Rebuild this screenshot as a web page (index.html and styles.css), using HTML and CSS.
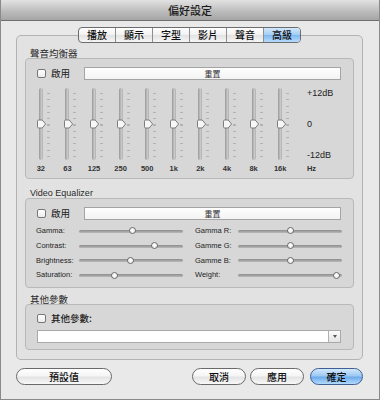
FILE: index.html
```html
<!DOCTYPE html>
<html lang="zh-Hant">
<head>
<meta charset="utf-8">
<title>偏好設定</title>
<link rel="stylesheet" href="styles.css">
</head>
<body>
<svg class="defs" width="0" height="0" aria-hidden="true">
  <symbol id="vthumb" viewBox="0 0 11 10">
    <path d="M1.5 2.2 Q1.5 1 2.7 1 H6.2 L9.6 5 L6.2 9 H2.7 Q1.5 9 1.5 7.8 Z" fill="#f7f7f7" stroke="#7c7c7c" stroke-width="1"/>
  </symbol>
</svg>
<div class="window">
  <div class="titlebar">偏好設定</div>
  <div class="content">
    <div class="tabs">
      <span class="tab">播放</span>
      <span class="tab">顯示</span>
      <span class="tab">字型</span>
      <span class="tab">影片</span>
      <span class="tab">聲音</span>
      <span class="tab active">高級</span>
    </div>
    <div class="panel">
      <div class="section-label">聲音均衡器</div>
      <div class="group eq">
        <div class="check-row">
          <span class="checkbox"></span><span class="check-label">啟用</span>
          <span class="reset">重置</span>
        </div>
        <div class="eq-body">
          <div class="band"><div class="vslider"><span class="vtrack"></span><span class="ticks"></span><svg class="vthumb"><use href="#vthumb"/></svg></div><span class="band-label">32</span></div>
          <div class="band"><div class="vslider"><span class="vtrack"></span><span class="ticks"></span><svg class="vthumb"><use href="#vthumb"/></svg></div><span class="band-label">63</span></div>
          <div class="band"><div class="vslider"><span class="vtrack"></span><span class="ticks"></span><svg class="vthumb"><use href="#vthumb"/></svg></div><span class="band-label">125</span></div>
          <div class="band"><div class="vslider"><span class="vtrack"></span><span class="ticks"></span><svg class="vthumb"><use href="#vthumb"/></svg></div><span class="band-label">250</span></div>
          <div class="band"><div class="vslider"><span class="vtrack"></span><span class="ticks"></span><svg class="vthumb"><use href="#vthumb"/></svg></div><span class="band-label">500</span></div>
          <div class="band"><div class="vslider"><span class="vtrack"></span><span class="ticks"></span><svg class="vthumb"><use href="#vthumb"/></svg></div><span class="band-label">1k</span></div>
          <div class="band"><div class="vslider"><span class="vtrack"></span><span class="ticks"></span><svg class="vthumb"><use href="#vthumb"/></svg></div><span class="band-label">2k</span></div>
          <div class="band"><div class="vslider"><span class="vtrack"></span><span class="ticks"></span><svg class="vthumb"><use href="#vthumb"/></svg></div><span class="band-label">4k</span></div>
          <div class="band"><div class="vslider"><span class="vtrack"></span><span class="ticks"></span><svg class="vthumb"><use href="#vthumb"/></svg></div><span class="band-label">8k</span></div>
          <div class="band"><div class="vslider"><span class="vtrack"></span><span class="ticks"></span><svg class="vthumb"><use href="#vthumb"/></svg></div><span class="band-label">16k</span></div>
          <div class="scale">
            <div class="scale-range"><span>+12dB</span><span>0</span><span>-12dB</span></div>
            <span class="band-label hz">Hz</span>
          </div>
        </div>
      </div>

      <div class="section-label en">Video Equalizer</div>
      <div class="group veq">
        <div class="check-row">
          <span class="checkbox"></span><span class="check-label">啟用</span>
          <span class="reset">重置</span>
        </div>
        <div class="hgrid">
          <span class="hlabel">Gamma:</span>
          <div class="hslider"><span class="htrack"></span><span class="hthumb" style="left:52%"></span></div>
          <span class="hlabel r">Gamma R:</span>
          <div class="hslider"><span class="htrack"></span><span class="hthumb" style="left:51%"></span></div>

          <span class="hlabel">Contrast:</span>
          <div class="hslider"><span class="htrack"></span><span class="hthumb" style="left:73%"></span></div>
          <span class="hlabel r">Gamme G:</span>
          <div class="hslider"><span class="htrack"></span><span class="hthumb" style="left:51%"></span></div>

          <span class="hlabel">Brightness:</span>
          <div class="hslider"><span class="htrack"></span><span class="hthumb" style="left:50%"></span></div>
          <span class="hlabel r">Gamme B:</span>
          <div class="hslider"><span class="htrack"></span><span class="hthumb" style="left:51%"></span></div>

          <span class="hlabel">Saturation:</span>
          <div class="hslider"><span class="htrack"></span><span class="hthumb" style="left:35%"></span></div>
          <span class="hlabel r">Weight:</span>
          <div class="hslider"><span class="htrack"></span><span class="hthumb" style="left:95%"></span></div>
        </div>
      </div>

      <div class="section-label">其他參數</div>
      <div class="group other">
        <div class="check-row">
          <span class="checkbox"></span><span class="check-label strong">其他參數:</span>
        </div>
        <div class="combo"><span class="combo-field"></span><span class="combo-btn"><span class="arrow"></span></span></div>
      </div>
    </div>

    <div class="buttons">
      <span class="btn wide">預設值</span>
      <span class="btn-group">
        <span class="btn">取消</span>
        <span class="btn">應用</span>
        <span class="btn primary">確定</span>
      </span>
    </div>
  </div>
</div>
</body>
</html>
```

FILE: styles.css
```css
html, body {
  margin: 0;
  padding: 0;
}

body {
  width: 380px;
  height: 400px;
  overflow: hidden;
  background: #e9e9e9;
  font-family: "Liberation Sans", "Noto Sans CJK TC", sans-serif;
  color: #222;
}

.defs {
  position: absolute;
  width: 0;
  height: 0;
  overflow: hidden;
}

.window {
  width: 380px;
  height: 400px;
  box-sizing: border-box;
  border: 1px solid #8a8a8a;
  border-top: none;
  background: #e9e9e9;
  display: flex;
  flex-direction: column;
}

.titlebar {
  height: 20px;
  border-bottom: 1px solid #6f6f6f;
  background: linear-gradient(#e2e2e2, #bababa 60%, #a5a5a5);
  text-align: center;
  font: 500 11px/20px "Noto Sans CJK TC", sans-serif;
  color: #1e1e1e;
}

.content {
  padding: 6px 16px 0 15px;
  display: flex;
  flex-direction: column;
}

/* segmented tabs */
.tabs {
  position: relative;
  z-index: 1;
  display: flex;
  align-self: center;
  height: 16px;
  box-sizing: border-box;
  margin-bottom: -8px;
  border: 1px solid #6c6c6c;
  border-radius: 4px;
  overflow: hidden;
  background: linear-gradient(#ffffff, #f1f1f1 50%, #e2e2e2 51%, #f6f6f6);
}

.tab {
  width: 36px;
  text-align: center;
  font: 500 10px/14px "Noto Sans CJK TC", sans-serif;
  color: #111;
}

.tab + .tab {
  border-left: 1px solid #8e8e8e;
}

.tab.active {
  background: linear-gradient(#d2e8fc, #a3cdf5 50%, #7fb8ef 51%, #b6dcfd);
}

/* main panel */
.panel {
  border: 1px solid #b3b3b3;
  border-radius: 5px;
  background: #e2e2e2;
  padding: 12px 8px 9px;
  display: flex;
  flex-direction: column;
}

.section-label {
  font: 9.5px/10px "Noto Sans CJK TC", sans-serif;
  color: #2a2a2a;
  padding-left: 5px;
}

.section-label.en {
  font: 9px/10px "Liberation Sans", sans-serif;
  margin-top: 9px;
}

.group {
  box-sizing: border-box;
  border: 1px solid #b8b8b8;
  border-radius: 4px;
  background: #d7d7d7;
  padding: 8px 12px 0 11px;
  display: flex;
  flex-direction: column;
}

.group.eq { height: 121px; }
.group.veq { height: 90px; }
.group.other { height: 46px; padding-top: 7px; }

.veq + .section-label { margin-top: 6px; }

.check-row {
  display: flex;
  align-items: center;
  height: 13px;
}

.checkbox {
  width: 9px;
  height: 9px;
  box-sizing: border-box;
  border: 1px solid #777;
  border-radius: 2px;
  background: linear-gradient(#ffffff, #ececec);
}

.check-label {
  margin-left: 5px;
  font: 9.5px/13px "Noto Sans CJK TC", sans-serif;
  color: #1a1a1a;
}

.check-label.strong {
  font-weight: 500;
}

.reset {
  margin-left: auto;
  width: 257px;
  height: 13px;
  box-sizing: border-box;
  border: 1px solid #a4a4a4;
  background: linear-gradient(#fefefe, #f3f3f3);
  text-align: center;
  font: 8px/11px "Noto Sans CJK TC", sans-serif;
  color: #333;
}

/* EQ vertical sliders */
.eq-body {
  display: flex;
  margin-top: 8px;
  margin-left: -9.5px;
}

.band {
  width: 26.6px;
  display: flex;
  flex-direction: column;
  align-items: center;
}

.vslider {
  position: relative;
  width: 100%;
  height: 72px;
  display: grid;
  grid-template-columns: 1fr 4px 1fr;
}

.vtrack {
  grid-column: 2;
  border-radius: 2px;
  background: linear-gradient(to right, #979797, #c9c9c9 60%, #b0b0b0);
}

.ticks {
  grid-column: 3;
  width: 3px;
  height: 64px;
  margin: 5px 0 0 4px;
  background: repeating-linear-gradient(to bottom, #b3b3b3 0 1px, transparent 1px 6.3px);
}

.vthumb {
  position: absolute;
  width: 11px;
  height: 10px;
  left: calc(50% - 4.5px);
  top: calc(50% - 5.5px);
}

.band-label {
  margin-top: 4px;
  font: bold 7.5px/10px "Liberation Sans", sans-serif;
  color: #333;
  white-space: nowrap;
}

.scale {
  margin-left: 13.5px;
  display: flex;
  flex-direction: column;
}

.scale-range {
  height: 72px;
  display: flex;
  flex-direction: column;
  justify-content: space-between;
  font: 9px/10px "Liberation Sans", sans-serif;
  color: #222;
}

.hz {
  align-self: flex-start;
}

/* video equalizer horizontal sliders */
.hgrid {
  display: grid;
  grid-template-columns: 43px 104px 55px 104px;
  grid-auto-rows: 14.8px;
  margin-top: 4px;
  margin-left: -1px;
}

.hlabel {
  font: 7.5px/14.8px "Liberation Sans", sans-serif;
  color: #222;
  white-space: nowrap;
}

.hlabel.r {
  padding-left: 12px;
}

.hslider {
  position: relative;
  display: flex;
  align-items: center;
}

.htrack {
  flex: 1;
  height: 3px;
  border-radius: 2px;
  background: linear-gradient(#8c8c8c, #b9b9b9);
}

.hthumb {
  position: absolute;
  top: calc(50% - 4px);
  width: 7px;
  height: 7px;
  margin-left: -4px;
  box-sizing: border-box;
  border: 1px solid #6c6c6c;
  border-radius: 50%;
  background: radial-gradient(circle at 50% 40%, #ffffff, #e6e6e6);
}

/* other params combo */
.combo {
  display: flex;
  height: 13px;
  margin-top: 5px;
  box-sizing: border-box;
  border: 1px solid #a9a9a9;
  background: #fff;
}

.combo-field {
  flex: 1;
}

.combo-btn {
  width: 11px;
  border-left: 1px solid #b0b0b0;
  background: linear-gradient(#fbfbfb, #e4e4e4);
  display: flex;
  align-items: center;
  justify-content: center;
}

.arrow {
  width: 0;
  height: 0;
  border-left: 2px solid transparent;
  border-right: 2px solid transparent;
  border-top: 3px solid #555;
}

/* bottom buttons */
.buttons {
  display: flex;
  margin-top: 8px;
}

.btn-group {
  margin-left: auto;
  display: flex;
  gap: 4px;
}

.btn {
  width: 54px;
  height: 17px;
  box-sizing: border-box;
  border: 1px solid #6a6a6a;
  border-radius: 9px;
  background: linear-gradient(#ffffff, #f5f5f5 45%, #e4e4e4 55%, #f8f8f8);
  text-align: center;
  font: 500 10px/15px "Noto Sans CJK TC", sans-serif;
  color: #111;
}

.btn.wide {
  width: 96px;
}

.btn.primary {
  width: 53px;
  margin-left: 2px;
  border-color: #3f5f92;
  background: linear-gradient(#d3e8fc, #9dc9f3 45%, #6eaaea 55%, #b3dcff);
}
```
